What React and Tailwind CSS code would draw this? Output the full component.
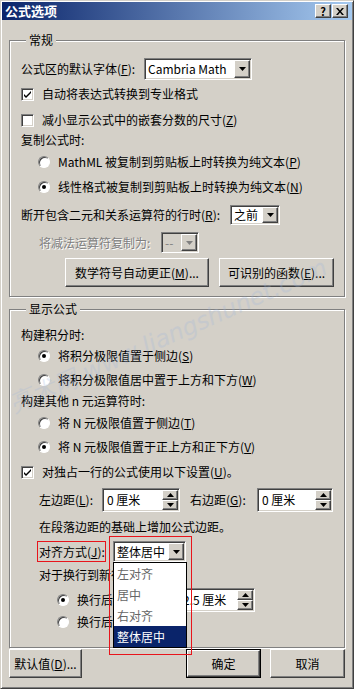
import React from 'react'

const sunken = 'border border-t-[#808080] border-l-[#808080] border-r-white border-b-white shadow-[inset_1px_1px_0_#404040,inset_-1px_-1px_0_#d4d0c8]'
const raised = 'border border-t-white border-l-white border-r-[#404040] border-b-[#404040] shadow-[inset_-1px_-1px_0_#808080]'

function Arrow({ dir = 'down', disabled }) {
  const d = dir === 'down' ? 'M0 0h7L3.5 4z' : 'M0 4h7L3.5 0z'
  return (
    <svg width="7" height="4" viewBox="0 0 7 4">
      <path d={d} fill={disabled ? '#808080' : '#000'} />
    </svg>
  )
}

function Select({ value, className, disabled }) {
  return (
    <div className={`${sunken} ${disabled ? 'bg-[#d4d0c8] text-[#808080]' : 'bg-white'} flex p-[1px] ${className}`}>
      <span className="flex-1 self-center pl-[2px] whitespace-nowrap">{value}</span>
      <div className={`w-[16px] ${raised} bg-[#d4d0c8] flex items-center justify-center`}>
        <Arrow disabled={disabled} />
      </div>
    </div>
  )
}

function Spin({ value, className }) {
  return (
    <div className={`${sunken} bg-white flex p-[1px] h-[24px] ${className}`}>
      <span className="flex-1 self-center pl-[3px] whitespace-nowrap">{value}</span>
      <div className="w-[16px] flex flex-col">
        <div className={`flex-1 ${raised} bg-[#d4d0c8] flex items-center justify-center`}><Arrow dir="up" /></div>
        <div className={`flex-1 ${raised} bg-[#d4d0c8] flex items-center justify-center`}><Arrow /></div>
      </div>
    </div>
  )
}

function Check({ checked, children }) {
  return (
    <div className="flex items-center gap-[8px]">
      <div className={`w-[13px] h-[13px] bg-white ${sunken} flex items-center justify-center`}>
        {checked && (
          <svg width="7" height="7" viewBox="0 0 7 7">
            <path d="M0 2l2 2 5-5v2l-5 5-2-2z" transform="translate(0 1)" fill="#000" />
          </svg>
        )}
      </div>
      <span className="whitespace-nowrap">{children}</span>
    </div>
  )
}

function Radio({ checked, children }) {
  return (
    <div className="flex items-center gap-[8px]">
      <div className="w-[12px] h-[12px] rounded-full bg-white border border-t-[#808080] border-l-[#808080] border-r-white border-b-white shadow-[inset_1px_1px_0_#404040] flex items-center justify-center">
        {checked && <div className="w-[4px] h-[4px] rounded-full bg-black" />}
      </div>
      <span className="whitespace-nowrap">{children}</span>
    </div>
  )
}

function Button({ children, className }) {
  return (
    <div className={`${raised} bg-[#d4d0c8] flex items-center justify-center whitespace-nowrap ${className}`}>
      {children}
    </div>
  )
}

export default function App() {
  return (
    <div className="relative w-[354px] h-[689px] bg-[#d4d0c8] border border-t-[#d4d0c8] border-l-[#d4d0c8] border-r-[#404040] border-b-[#404040] shadow-[inset_1px_1px_0_#fff,inset_-1px_-1px_0_#808080] p-[1px] flex flex-col text-[12px] leading-[16px] text-black font-['Noto_Sans_CJK_SC',sans-serif] overflow-hidden">
      {/* title bar */}
      <div className="h-[18px] shrink-0 bg-[linear-gradient(to_right,#0a246a,#a6caf0)] flex items-center pl-[3px] pr-[4px]">
        <span className="text-white font-bold text-[13px]">公式选项</span>
        <div className="ml-auto flex gap-[1px]">
          <div className={`w-[16px] h-[14px] ${raised} bg-[#d4d0c8] flex items-center justify-center text-[11px] font-bold leading-none`}>?</div>
          <div className={`w-[16px] h-[14px] ${raised} bg-[#d4d0c8] flex items-center justify-center`}>
            <svg width="8" height="7" viewBox="0 0 8 7">
              <path d="M0 0h2l2 2.5L6 0h2L5 3.5 8 7H6L4 4.5 2 7H0l3-3.5z" fill="#000" />
            </svg>
          </div>
        </div>
      </div>

      {/* 常规 */}
      <fieldset className="mx-[7px] mt-[12px] border border-[#808080] shadow-[1px_1px_0_#fff,inset_1px_1px_0_#fff] pl-[11px] pr-[10px] pb-[9px]">
        <legend className="ml-[5px] px-[3px] h-[16px] leading-[16px] bg-[#d4d0c8]">常规</legend>
        <div className="mt-[10px] h-[22px] flex items-center">
          <span className="w-[123px] whitespace-nowrap">公式区的默认字体(<u>F</u>):</span>
          <Select value="Cambria Math" className="w-[108px] h-[22px]" />
        </div>
        <div className="mt-[4px] h-[20px] flex items-center"><Check checked>自动将表达式转换到专业格式</Check></div>
        <div className="mt-[6px] h-[20px] flex items-center"><Check>减小显示公式中的嵌套分数的尺寸(<u>Z</u>)</Check></div>
        <div className="h-[20px] flex items-center">复制公式时:</div>
        <div className="mt-[2px] h-[20px] flex items-center pl-[17px]"><Radio>MathML 被复制到剪贴板上时转换为纯文本(<u>P</u>)</Radio></div>
        <div className="mt-[5px] h-[20px] flex items-center pl-[17px]"><Radio checked>线性格式被复制到剪贴板上时转换为纯文本(<u>N</u>)</Radio></div>
        <div className="mt-[8px] h-[20px] flex items-center">
          <span className="w-[209px] whitespace-nowrap">断开包含二元和关系运算符的行时(<u>R</u>):</span>
          <Select value="之前" className="w-[50px] h-[20px]" />
        </div>
        <div className="mt-[7px] h-[21px] flex items-center pl-[18px]">
          <span className="w-[122px] whitespace-nowrap text-[#808080] [text-shadow:1px_1px_0_#fff]">将减法运算符复制为:</span>
          <Select value="--" disabled className="w-[38px] h-[21px]" />
        </div>
        <div className="mt-[5px] h-[29px] flex justify-end gap-[10px]">
          <Button className="w-[144px]">数学符号自动更正(<u>M</u>)...</Button>
          <Button className="w-[115px]">可识别的函数(<u>E</u>)...</Button>
        </div>
      </fieldset>

      {/* 显示公式 */}
      <fieldset className="mx-[7px] mt-[4px] border border-[#808080] shadow-[1px_1px_0_#fff,inset_1px_1px_0_#fff] pl-[11px] pr-[10px] pb-[15px]">
        <legend className="ml-[5px] px-[3px] h-[16px] leading-[16px] bg-[#d4d0c8]">显示公式</legend>
        <div className="mt-[8px] h-[20px] flex items-center">构建积分时:</div>
        <div className="mt-[1px] h-[20px] flex items-center pl-[17px]"><Radio checked>将积分极限值置于侧边(<u>S</u>)</Radio></div>
        <div className="mt-[4px] h-[20px] flex items-center pl-[17px]"><Radio>将积分极限值居中置于上方和下方(<u>W</u>)</Radio></div>
        <div className="mt-[1px] h-[20px] flex items-center">构建其他 n 元运算符时:</div>
        <div className="mt-[2px] h-[20px] flex items-center pl-[17px]"><Radio>将 N 元极限值置于侧边(<u>T</u>)</Radio></div>
        <div className="mt-[4px] h-[20px] flex items-center pl-[17px]"><Radio checked>将 N 元极限值置于正上方和正下方(<u>V</u>)</Radio></div>
        <div className="mt-[5px] h-[20px] flex items-center"><Check checked>对独占一行的公式使用以下设置(<u>U</u>)。</Check></div>
        <div className="mt-[6px] h-[24px] flex items-center pl-[18px]">
          <span className="w-[63px] whitespace-nowrap">左边距(<u>L</u>):</span>
          <Spin value="0 厘米" className="w-[78px]" />
          <span className="ml-[10px] w-[67px] whitespace-nowrap">右边距(<u>G</u>):</span>
          <Spin value="0 厘米" className="w-[76px]" />
        </div>
        <div className="mt-[5px] h-[20px] flex items-center pl-[18px]">在段落边距的基础上增加公式边距。</div>
        <div className="mt-[4px] h-[21px] flex items-center pl-[18px] relative z-10">
          <span className="relative w-[74px] whitespace-nowrap">
            对齐方式(<u>J</u>):
            <span className="absolute -left-[2px] -top-[3px] w-[69px] h-[21px] border border-[#e8141b]" />
          </span>
          <div className="relative">
            <Select value="整体居中" className="w-[73px] h-[21px]" />
            <div className="absolute left-0 top-full w-[74px] border border-black bg-white">
              <div className="h-[21px] flex items-center pl-[3px] text-[#666]">左对齐</div>
              <div className="h-[21px] flex items-center pl-[3px] text-[#666]">居中</div>
              <div className="h-[21px] flex items-center pl-[3px] text-[#666]">右对齐</div>
              <div className="h-[21px] flex items-center pl-[3px] bg-[#0a246a] text-white">整体居中</div>
            </div>
            <div className="absolute -left-[4px] -top-[5px] w-[83px] h-[119px] border border-[#e8141b]" />
          </div>
        </div>
        <div className="mt-[3px] h-[20px] flex items-center pl-[18px]">对于换行到新行的公式:</div>
        <div className="mt-[3px] h-[24px] flex items-center pl-[36px]">
          <div className="w-[121px]"><Radio checked>换行后缩进(<u>I</u>):</Radio></div>
          <Spin value="2.5 厘米" className="w-[77px]" />
        </div>
        <div className="h-[20px] flex items-center pl-[36px]"><Radio>换行后右对齐(<u>H</u>)</Radio></div>
      </fieldset>

      {/* bottom buttons */}
      <div className="mt-[1px] h-[29px] flex px-[7px]">
        <Button className="w-[73px]">默认值(<u>D</u>)...</Button>
        <div className="ml-auto w-[75px] border border-black flex">
          <Button className="flex-1">确定</Button>
        </div>
        <Button className="ml-[9px] w-[75px]">取消</Button>
      </div>

      {/* watermark */}
      <div className="absolute left-[15px] top-[392px] origin-[0_100%] -rotate-[24deg] text-[24px] leading-none italic text-[#9db6dc] opacity-25 whitespace-nowrap pointer-events-none font-['DejaVu_Sans',sans-serif]">
        亮术网 www.liangshunet.com
      </div>
    </div>
  )
}
